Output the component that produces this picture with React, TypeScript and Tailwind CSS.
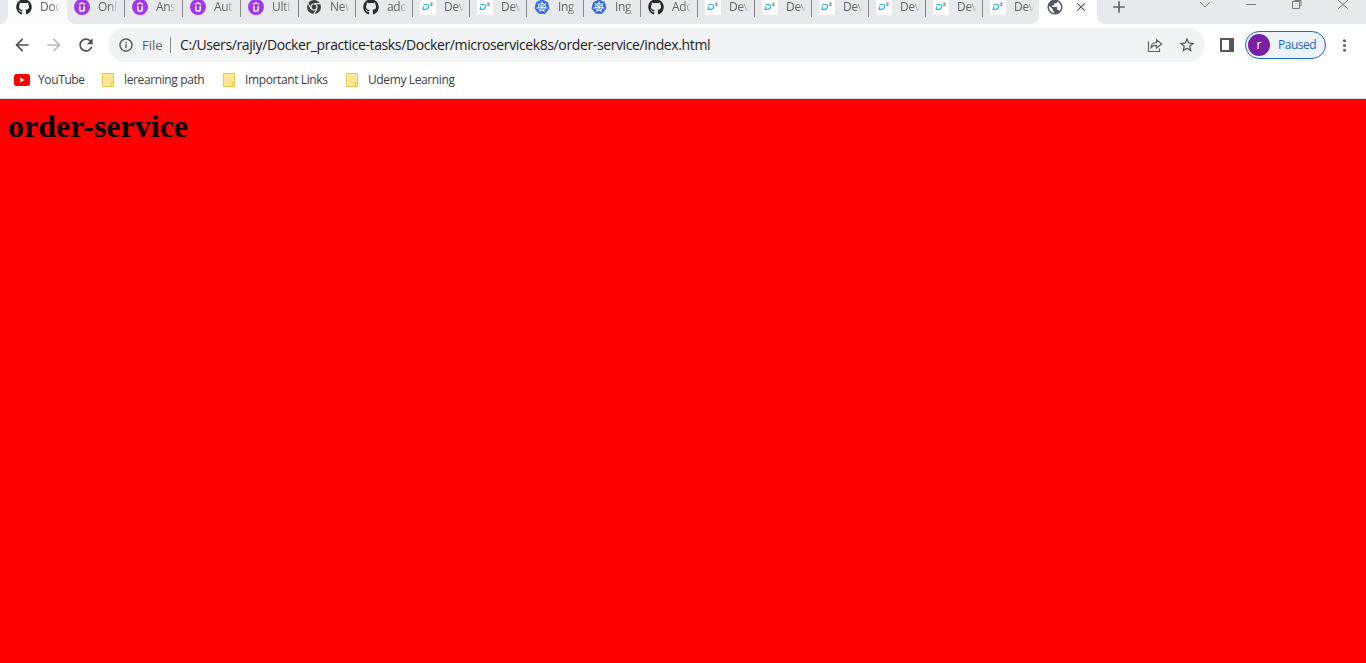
import React from "react";
import { FaGithub } from "react-icons/fa";
import {
  MdAdd,
  MdArrowBack,
  MdArrowForward,
  MdClose,
  MdInfoOutline,
  MdMoreVert,
  MdPublic,
  MdRefresh,
  MdStarBorder,
} from "react-icons/md";

type Kind = "github" | "udemy" | "chrome" | "kube" | "dev";

const tabs: { kind: Kind; title: string; width: string }[] = [
  { kind: "udemy", title: "Onli", width: "w-[58px]" },
  { kind: "udemy", title: "Ans", width: "w-[58px]" },
  { kind: "udemy", title: "Aut", width: "w-[58px]" },
  { kind: "udemy", title: "Ulti", width: "w-[58px]" },
  { kind: "chrome", title: "New", width: "w-[57px]" },
  { kind: "github", title: "add", width: "w-[57px]" },
  { kind: "dev", title: "Dev", width: "w-[57px]" },
  { kind: "dev", title: "Dev", width: "w-[57px]" },
  { kind: "kube", title: "Ing", width: "w-[57px]" },
  { kind: "kube", title: "Ing", width: "w-[57px]" },
  { kind: "github", title: "Add", width: "w-[57px]" },
  { kind: "dev", title: "Dev", width: "w-[57px]" },
  { kind: "dev", title: "Dev", width: "w-[57px]" },
  { kind: "dev", title: "Dev", width: "w-[57px]" },
  { kind: "dev", title: "Dev", width: "w-[57px]" },
  { kind: "dev", title: "Dev", width: "w-[57px]" },
  { kind: "dev", title: "Dev", width: "w-[57px]" },
];

function Favicon({ kind }: { kind: Kind }) {
  if (kind === "github") return <FaGithub size={16} className="shrink-0 text-[#24292f]" />;
  if (kind === "chrome")
    return (
      <svg width="16" height="16" viewBox="0 0 16 16" className="shrink-0">
        <circle cx="8" cy="8" r="7" fill="#3c4043" />
        <path d="M8 4.6h6.4M5 9.7 1.9 4.3M11 9.7l-3.2 5.4" stroke="#e8e9ed" strokeWidth="1.1" />
        <circle cx="8" cy="8" r="3.6" fill="#e8e9ed" />
        <circle cx="8" cy="8" r="2.4" fill="#3c4043" />
      </svg>
    );
  if (kind === "kube")
    return (
      <svg width="16" height="16" viewBox="0 0 16 16" className="shrink-0">
        <path d="M8 .9 13.5 3.5 14.9 9.4 11.1 14.3H4.9L1.1 9.4 2.5 3.5Z" fill="#326ce5" stroke="#326ce5" strokeLinejoin="round" />
        <g fill="none" stroke="#fff" strokeWidth=".9">
          <circle cx="8" cy="7.9" r="3.6" />
          <path d="M8 2.4v5.5M3.7 4.5 8 7.9l4.3-3.4M2.6 9.1 8 7.9l5.4 1.2M5.6 12.9 8 7.9l2.4 5" />
        </g>
      </svg>
    );
  if (kind === "udemy")
    return (
      <svg width="16" height="16" viewBox="0 0 16 16" className="shrink-0">
        <circle cx="8" cy="8" r="8" fill="#a435f0" />
        <path d="M5 5.6 8 3.8l3 1.8" fill="none" stroke="#fff" strokeWidth="1.3" />
        <path d="M5.8 7v3.2c0 2.6 4.4 2.6 4.4 0V7" fill="none" stroke="#fff" strokeWidth="1.5" />
      </svg>
    );
  return (
    <svg width="16" height="16" viewBox="0 0 16 16" className="shrink-0">
      <path d="M0 0h16v16H0z" fill="#fff" />
      <path d="M3.4 5.5h3.4c3 0 2.2 4.9-1.2 4.9H3.1l.8-3.1" fill="none" stroke="#2cb5e0" strokeWidth="1.2" />
      <path d="M10.2 4h2.2L10.5 6.4h2.2" fill="none" stroke="#5b6770" strokeWidth=".8" />
    </svg>
  );
}

function TabTitle({ children }: { children: React.ReactNode }) {
  return (
    <span className="ml-2 w-5 shrink-0 overflow-hidden whitespace-nowrap text-[12px] leading-4 tracking-[-0.3px] text-[#5f6368] [mask-image:linear-gradient(to_right,black_60%,transparent)]">
      {children}
    </span>
  );
}

function Folder() {
  return (
    <svg width="13" height="16" viewBox="0 0 13 16" className="shrink-0">
      <path d="M.5 1.5h11v13H.5z" fill="#ffe793" stroke="#e9c64b" />
      <path d="M9.5 10.5h2.2v4H9.5z" fill="#ffe793" stroke="#e9c64b" />
    </svg>
  );
}

export default function App() {
  return (
    <div className="flex h-[663px] w-[1366px] flex-col overflow-hidden bg-white font-['Open_Sans','Noto_Sans',sans-serif]">
      <header className="flex h-6 shrink-0 bg-white">
        <div className="w-2 shrink-0 rounded-br-lg bg-[#e8e9ed]" />
        <div className="flex h-6 w-[59px] shrink-0 bg-[#fafafa] pl-2">
          <div className="-mt-px flex h-4 items-center">
            <Favicon kind="github" />
            <TabTitle>Doc</TabTitle>
          </div>
        </div>
        <div className="flex h-6 w-[972px] shrink-0 rounded-b-lg bg-[#e8e9ed]">
          {tabs.map((t, i) => (
            <div key={i} className={"flex h-6 shrink-0 justify-between pl-[7px] " + t.width}>
              <div className="-mt-px flex h-4 items-center">
                <Favicon kind={t.kind} />
                <TabTitle>{t.title}</TabTitle>
              </div>
              {i < tabs.length - 1 && <div className="h-[17px] w-px bg-[#85888c]" />}
            </div>
          ))}
        </div>
        <div className="flex w-[58px] shrink-0 pl-[7px] text-[#55585d]">
          <MdPublic size={18} className="-mt-[2px]" />
          <MdClose size={14} className="ml-[10px]" />
        </div>
        <div className="flex grow rounded-bl-lg bg-[#e8e9ed] text-[#5f6368]">
          <MdAdd size={20} className="-mt-[3px] ml-3" />
          <svg width="160" height="12" viewBox="1196 0 160 12" className="ml-[67px]" fill="none" stroke="#77797d">
            <path d="m1200 2 5 5 5-5M1246 4.5h10M1292.5 1.5h7v7h-7zM1294.5.5h6.5v6M1338 0l10 9M1348 0l-10 9" />
          </svg>
        </div>
      </header>

      <div className="flex h-[42px] shrink-0 items-center text-[#5f6368]">
        <MdArrowBack size={20} className="ml-3 text-[#4d5156]" />
        <MdArrowForward size={20} className="ml-3 text-[#babcbe]" />
        <MdRefresh size={20} className="ml-3 text-[#4d5156]" />
        <div className="ml-3 flex h-[34px] w-[1097px] items-center rounded-full bg-[#f1f3f4] pl-[10px] pr-[9px]">
          <MdInfoOutline size={16} className="text-[#4d5156]" />
          <span className="ml-2 w-7 text-[13px] leading-4">File</span>
          <div className="h-4 w-px bg-[#85888c]" />
          <span className="ml-[9px] whitespace-nowrap text-[14px] leading-4 tracking-[-0.38px] text-[#202124]">
            C:/Users/rajiy/Docker_practice-tasks/Docker/microservicek8s/order-service/index.html
          </span>
          <div className="grow" />
          <svg width="16" height="16" viewBox="0 0 16 16" fill="none" stroke="#5f6368" strokeWidth="1.2">
            <path d="M1.5 4.5v10h11v-3" />
            <path d="M4 10.5c.3-3 2-5 5.5-5V2.8L14.6 7l-5.1 4V8.3C7 8.2 5.3 9 4 10.5Z" />
          </svg>
          <MdStarBorder size={18} className="ml-[15px] text-[#4d5156]" />
        </div>
        <svg width="14" height="14" viewBox="0 0 14 14" className="ml-[15px]">
          <path d="M0 0h14v14H0zM2 2v10h7V2z" fill="#55585d" fillRule="evenodd" />
        </svg>
        <div className="ml-[11px] flex h-7 w-[81px] items-center rounded-full border border-[#1967d2] bg-[#edf3fb] pl-[2px]">
          <div className="flex h-[22px] w-[22px] items-center justify-center rounded-full bg-[#7b1fa2] text-[12px] leading-4 text-white">r</div>
          <span className="ml-2 text-[12px] leading-4 tracking-[-0.5px] text-[#1967d2]">Paused</span>
        </div>
        <MdMoreVert size={19} className="ml-[9px]" />
      </div>

      <nav className="flex h-8 shrink-0 items-center pb-1 text-[12px] leading-4 tracking-[-0.38px] text-[#3c4043]">
        <svg width="16" height="12" viewBox="0 0 16 12" className="ml-[14px] shrink-0">
          <rect width="16" height="12" rx="2.5" fill="#f00" />
          <path d="m6.3 3.6 4.2 2.4-4.2 2.4z" fill="#fff" />
        </svg>
        <span className="ml-2 w-16 whitespace-nowrap">YouTube</span>
        <Folder />
        <span className="ml-[9px] w-[99px] whitespace-nowrap">lerearning path</span>
        <Folder />
        <span className="ml-[9px] w-[101px] whitespace-nowrap">Important Links</span>
        <Folder />
        <span className="ml-[9px] whitespace-nowrap">Udemy Learning</span>
      </nav>
      <div className="h-px shrink-0 bg-[#dadce0]" />
      <main className="grow bg-[#ff0000] px-2 pt-[9px]">
        <h1 className="font-['Liberation_Serif',serif] text-[32px] font-bold leading-[37px] text-black">order-service</h1>
      </main>
    </div>
  );
}
